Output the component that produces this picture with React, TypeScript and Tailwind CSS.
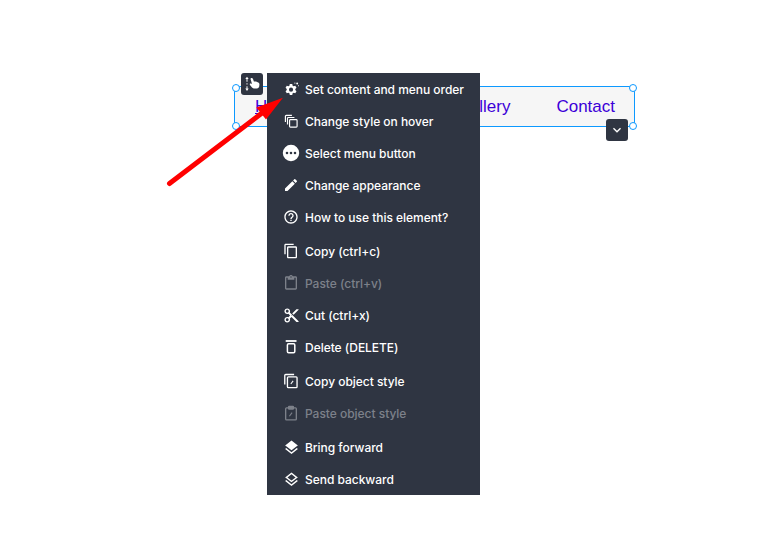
import React from 'react';
import {
  MdContentCopy,
  MdContentCut,
  MdEdit,
  MdHelpOutline,
  MdLayers,
  MdOutlineContentPaste,
  MdOutlineLayers,
  MdKeyboardArrowDown,
} from 'react-icons/md';

const GearIcon = () => (
  <svg width="17" height="17" viewBox="0 0 18 18" fill="currentColor">
    <path
      fillRule="evenodd"
      d="M7.2 3.2h2.6l.4 1.7c.4.2.8.4 1.1.6l1.7-.5 1.3 2.2-1.3 1.2c.1.4.1.8 0 1.2l1.3 1.2-1.3 2.2-1.7-.5c-.3.2-.7.5-1.1.6l-.4 1.7H7.2l-.4-1.7c-.4-.2-.8-.4-1.1-.6L4 13l-1.3-2.2L4 9.6c-.1-.4-.1-.8 0-1.2L2.7 7.2 4 5l1.7.5c.3-.2.7-.5 1.1-.6zM8.500 7a2.200 2.200 0 1 0 0 4.400 2.200 2.200 0 0 0 0-4.400z"
    />
    <circle cx="15" cy="2.6" r="1" />
    <circle cx="12.6" cy="2.2" r=".6" />
    <circle cx="16.4" cy="5" r=".6" />
  </svg>
);

const HoverStyleIcon = () => (
  <svg width="15" height="15" viewBox="0 0 18 18" fill="none" stroke="currentColor" strokeWidth="1.4">
    <rect x="6.7" y="6.7" width="9" height="9" rx="1" />
    <path d="M4.2 12.5V5.2a1 1 0 0 1 1-1h7.3" />
    <path d="M1.7 9.5V2.7a1 1 0 0 1 1-1h6.8" />
  </svg>
);

const DotsIcon = () => (
  <svg width="18" height="18" viewBox="0 0 18 18" fill="currentColor">
    <path
      fillRule="evenodd"
      d="M9 .8a8.2 8.2 0 1 1 0 16.4A8.2 8.2 0 0 1 9 .8zM5 7.7a1.3 1.3 0 1 0 0 2.6 1.3 1.3 0 0 0 0-2.6zm4 0a1.3 1.3 0 1 0 0 2.6 1.3 1.3 0 0 0 0-2.6zm4 0a1.3 1.3 0 1 0 0 2.6 1.3 1.3 0 0 0 0-2.6z"
    />
  </svg>
);

const TrashIcon = () => (
  <svg width="18" height="18" viewBox="0 0 18 18" fill="none" stroke="currentColor" strokeWidth="1.5">
    <path d="M3.700 3h10.800" strokeWidth="1.8" />
    <rect x="5.400" y="5.700" width="7.400" height="9" rx="1.2" />
  </svg>
);

const CopyStyleIcon = () => (
  <svg width="16" height="16" viewBox="0 0 18 18" fill="none" stroke="currentColor" strokeWidth="1.5">
    <path d="M2 13V2.7a1 1 0 0 1 1-1h9.5" />
    <rect x="5" y="4.400" width="10.800" height="12" rx="1" />
    <path d="M8.800 12.400l2.600-3.600" strokeWidth="1.2" />
  </svg>
);

const PasteStyleIcon = () => (
  <svg width="16" height="16" viewBox="0 0 18 18" fill="none" stroke="currentColor" strokeWidth="1.5">
    <rect x="3" y="3.200" width="12" height="13.600" rx="1" />
    <rect x="6.300" y="1.600" width="5.400" height="3" rx=".6" fill="currentColor" />
    <path d="M7.200 12.600l3-4" strokeWidth="1.200" />
  </svg>
);

const ReorderIcon = () => (
  <svg width="18" height="18" viewBox="0 0 18 18" fill="currentColor">
    <path d="M4 1.700l1.700 2.400H4.500v2.600h-1V4.100H2.300zM3.500 8.200h1v1.400h-1zM3.500 11.300h1v2.300h1.200L4 16l-1.700-2.400h1.200z" />
    <path d="M8.300 3c.7-.3 1.300.1 1.600.8l1 2.800c.6-.2 1.400-.2 2.100 0l2.200.9c.9.4 1.400 1.300 1.200 2.300l-.2 1.700c-.2 1.100-1.100 1.900-2.200 1.900h-3.300c-.7 0-1.300-.3-1.700-.8L7 10c-.4-.5-.3-1.100.2-1.400.5-.3 1-.2 1.400.2l.5.5-1.500-5c-.2-.6.1-1.300.7-1.300z" />
  </svg>
);

type Item = { label: string; icon: React.ReactNode; disabled?: boolean };

const groups: Item[][] = [
  [
    { label: 'Set content and menu order', icon: <GearIcon /> },
    { label: 'Change style on hover', icon: <HoverStyleIcon /> },
    { label: 'Select menu button', icon: <DotsIcon /> },
    { label: 'Change appearance', icon: <MdEdit size={16} /> },
    { label: 'How to use this element?', icon: <MdHelpOutline size={16} /> },
  ],
  [
    { label: 'Copy (ctrl+c)', icon: <MdContentCopy size={16} /> },
    { label: 'Paste (ctrl+v)', icon: <MdOutlineContentPaste size={16} />, disabled: true },
    { label: 'Cut (ctrl+x)', icon: <MdContentCut size={17} /> },
    { label: 'Delete (DELETE)', icon: <TrashIcon /> },
  ],
  [
    { label: 'Copy object style', icon: <CopyStyleIcon /> },
    { label: 'Paste object style', icon: <PasteStyleIcon />, disabled: true },
  ],
  [
    { label: 'Bring forward', icon: <MdLayers size={17} /> },
    { label: 'Send backward', icon: <MdOutlineLayers size={17} /> },
  ],
];

const Handle = ({ className }: { className: string }) => (
  <span className={`absolute w-2 h-2 rounded-full bg-white border border-[#0d99ff] ${className}`} />
);

const MenuRow = ({ item }: { item: Item }) => (
  <div
    className={`h-8 flex items-center gap-[5px] pl-[15px] text-xs font-medium tracking-[-0.03px] ${
      item.disabled ? 'text-[#7d818a]' : 'text-white'
    }`}
  >
    <span className="w-[18px] h-[18px] flex items-center justify-center shrink-0">{item.icon}</span>
    <span className="pt-[1px]">{item.label}</span>
  </div>
);

export default function App() {
  return (
    <div className="relative w-[774px] h-[540px] bg-white overflow-hidden font-['Inter',sans-serif]">
      <div className="pt-[86px] pl-[234px]">
        <nav className="relative w-[401px] h-[41px] bg-[#f6f6f6] border border-[#0d99ff] flex items-center pl-[20px] pr-[19px] font-['Liberation_Sans',sans-serif] text-[17px] text-[#3c00d8]">
          <a className="underline">Home</a>
          <a className="ml-auto">Gallery</a>
          <a className="ml-[46px]">Contact</a>
          <Handle className="-left-[3px] -top-[3px]" />
          <Handle className="-right-[3px] -top-[3px]" />
          <Handle className="-left-[3px] -bottom-[4px]" />
          <Handle className="-right-[3px] -bottom-[4px]" />
          <span className="absolute left-[371px] top-[32px] w-[22px] h-[22px] rounded-[3px] bg-[#2f3542] text-white flex items-center justify-center">
            <MdKeyboardArrowDown size={16} />
          </span>
        </nav>
      </div>

      <span className="absolute left-[241px] top-[73px] w-[22px] h-[22px] rounded-[3px] bg-[#2f3542] text-white flex items-center justify-center">
        <ReorderIcon />
      </span>

      <div className="absolute left-[267px] top-[73px] w-[213px] h-[422px] bg-[#2f3542] flex flex-col gap-[2px]">
        {groups.map((group, i) => (
          <div key={i}>
            {group.map((item) => (
              <MenuRow key={item.label} item={item} />
            ))}
          </div>
        ))}
      </div>

      <svg className="absolute left-0 top-0" width="774" height="540" viewBox="0 0 774 540" fill="none">
        <path d="M169.500 183.500L262 113" stroke="#ff0000" strokeWidth="5" strokeLinecap="round" />
        <path d="M280 100L258 108L266 118Z" fill="#ff0000" stroke="#ff0000" strokeWidth="2" />
      </svg>
    </div>
  );
}
